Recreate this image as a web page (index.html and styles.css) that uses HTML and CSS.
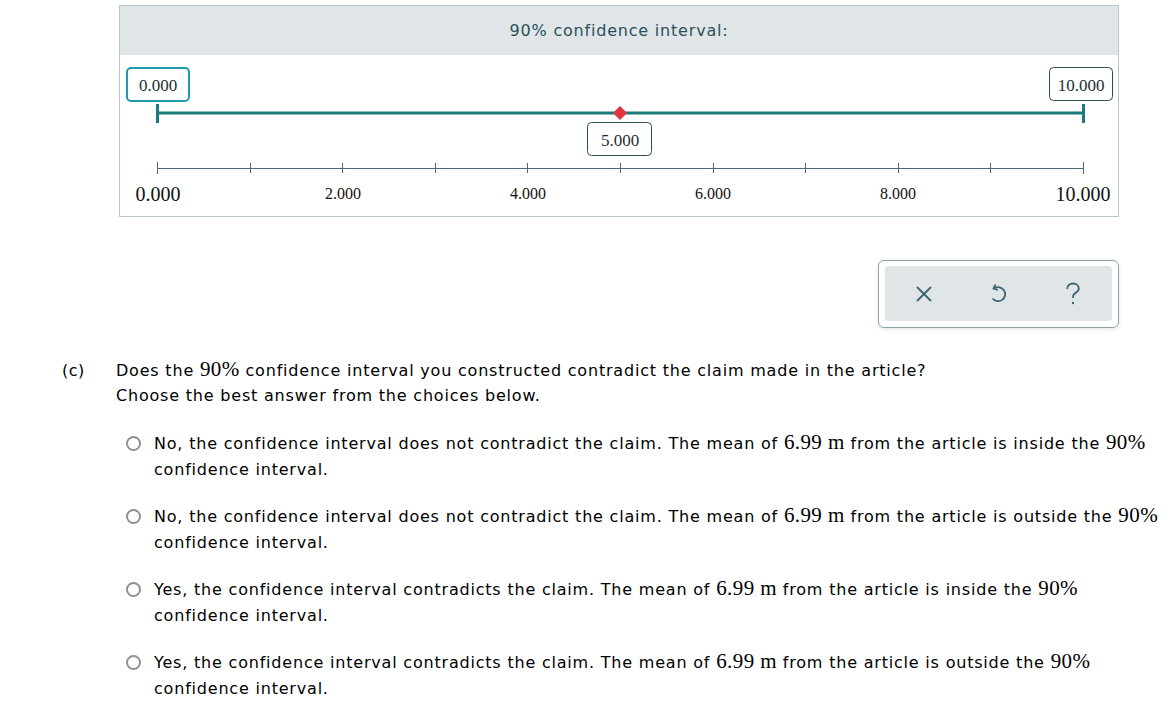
FILE: index.html
```html
<!DOCTYPE html>
<html>
<head>
<meta charset="utf-8">
<link rel="stylesheet" href="styles.css">
</head>
<body>
<div class="wrap">
  <div class="graph">
    <div class="graph-head">90% confidence interval:</div>
    <svg class="canvas" width="998" height="161" viewBox="0 0 998 161">
      <line x1="37" y1="58" x2="963" y2="58" stroke="#1b7a7c" stroke-width="3"/>
      <line x1="37.5" y1="49" x2="37.5" y2="68" stroke="#1b7a7c" stroke-width="3"/>
      <line x1="963.5" y1="49" x2="963.5" y2="68" stroke="#1b7a7c" stroke-width="3"/>
      <rect x="495" y="53" width="10" height="10" fill="#e0343f" transform="rotate(45 500 58)"/>
      <line x1="37" y1="113.5" x2="963" y2="113.5" stroke="#4a6a75" stroke-width="1"/>
      <g stroke="#4a6a75" stroke-width="1">
        <line x1="37.5" y1="107" x2="37.5" y2="119"/>
        <line x1="130.5" y1="108" x2="130.5" y2="118"/>
        <line x1="222.5" y1="108" x2="222.5" y2="118"/>
        <line x1="315.5" y1="108" x2="315.5" y2="118"/>
        <line x1="407.5" y1="108" x2="407.5" y2="118"/>
        <line x1="500.5" y1="108" x2="500.5" y2="118"/>
        <line x1="593.5" y1="108" x2="593.5" y2="118"/>
        <line x1="685.5" y1="108" x2="685.5" y2="118"/>
        <line x1="778.5" y1="108" x2="778.5" y2="118"/>
        <line x1="870.5" y1="108" x2="870.5" y2="118"/>
        <line x1="963.5" y1="107" x2="963.5" y2="119"/>
      </g>
      <g class="axis-label">
        <text x="38" y="146" class="big">0.000</text>
        <text x="223" y="144">2.000</text>
        <text x="408" y="144">4.000</text>
        <text x="593" y="144">6.000</text>
        <text x="778" y="144">8.000</text>
        <text x="963" y="146" class="big">10.000</text>
      </g>
      <rect x="7" y="13" width="62" height="33" rx="4" fill="#fff" stroke="#1e9ab0" stroke-width="2"/>
      <text x="38" y="36" class="box-label">0.000</text>
      <rect x="929.5" y="12.5" width="63" height="33" rx="4" fill="#fff" stroke="#2f4f58" stroke-width="1"/>
      <text x="961" y="36" class="box-label">10.000</text>
      <rect x="467.5" y="67.5" width="64" height="33" rx="4" fill="#fff" stroke="#2f4f58" stroke-width="1"/>
      <text x="500" y="91" class="box-label">5.000</text>
    </svg>
  </div>

  <div class="toolbar-row">
    <div class="toolbar">
      <div class="toolbar-inner">
        <span class="tool">
          <svg width="18" height="18" viewBox="0 0 18 18"><path d="M2 2 L16 16 M16 2 L2 16" stroke="#3d6570" stroke-width="1.8" fill="none"/></svg>
        </span>
        <span class="tool">
          <svg width="20" height="22" viewBox="0 0 20 22"><path d="M6.5 5.2 A7 7 0 1 1 4.6 15.5" stroke="#3d6570" stroke-width="1.8" fill="none"/><path d="M7.5 1.5 L5.5 5.5 L9.8 7" stroke="#3d6570" stroke-width="1.8" fill="none"/></svg>
        </span>
        <span class="tool">
          <svg width="16" height="24" viewBox="0 0 16 24"><path d="M2.2 7 C2.2 3.4 4.8 1.5 8 1.5 C11.3 1.5 13.8 3.6 13.8 6.6 C13.8 9.6 11 10.6 9.2 12 C8.2 12.8 8 13.8 8 16" stroke="#3d6570" stroke-width="1.8" fill="none"/><circle cx="8" cy="21" r="1.2" fill="#3d6570"/></svg>
        </span>
      </div>
    </div>
  </div>
</div>

<div class="question">
  <div class="q-letter">(c)</div>
  <div class="q-body">
    <p class="q-text">Does the <span class="m">90%</span> confidence interval you constructed contradict the claim made in the article?<br>Choose the best answer from the choices below.</p>
    <ul class="choices">
      <li class="choice"><span class="radio"></span><span class="c-text">No, the confidence interval does not contradict the claim. The mean of <span class="m">6.99 m</span> from the article is inside the <span class="m">90%</span> confidence interval.</span></li>
      <li class="choice"><span class="radio"></span><span class="c-text">No, the confidence interval does not contradict the claim. The mean of <span class="m">6.99 m</span> from the article is outside the <span class="m">90%</span> confidence interval.</span></li>
      <li class="choice"><span class="radio"></span><span class="c-text">Yes, the confidence interval contradicts the claim. The mean of <span class="m">6.99 m</span> from the article is inside the <span class="m">90%</span> confidence interval.</span></li>
      <li class="choice"><span class="radio"></span><span class="c-text">Yes, the confidence interval contradicts the claim. The mean of <span class="m">6.99 m</span> from the article is outside the <span class="m">90%</span> confidence interval.</span></li>
    </ul>
  </div>
</div>
</body>
</html>
```

FILE: styles.css
```css
html, body {
  margin: 0;
  padding: 0;
  background: #fff;
}
body {
  font-family: "DejaVu Sans", Verdana, sans-serif;
  font-size: 16px;
  letter-spacing: 0.8px;
  color: #000;
}
.wrap {
  padding: 5px 0 0 119px;
  width: 1000px;
}
.graph {
  width: 998px;
  border: 1px solid #b9c7cc;
}
.graph-head {
  height: 49px;
  background: #e0e6e8;
  color: #2d4f5a;
  font-size: 16px;
  text-align: center;
  line-height: 50px;
}
.canvas {
  display: block;
  letter-spacing: 0;
}
.axis-label text {
  font-family: "Liberation Serif", "Times New Roman", serif;
  font-size: 16px;
  fill: #111;
  text-anchor: middle;
}
.axis-label text.big {
  font-size: 20px;
}
.box-label {
  font-family: "Liberation Serif", "Times New Roman", serif;
  font-size: 17px;
  fill: #1c2e33;
  text-anchor: middle;
}
.toolbar-row {
  display: flex;
  justify-content: flex-end;
  margin-top: 43px;
}
.toolbar {
  width: 227px;
  height: 55px;
  padding: 5px 6px 6px 6px;
  border: 1px solid #8ea2a9;
  border-radius: 6px;
  box-shadow: 0 1px 4px rgba(0,0,0,0.12);
}
.toolbar-inner {
  height: 55px;
  background: #e0e6e8;
  border-radius: 4px;
  display: flex;
  align-items: center;
  justify-content: space-around;
  padding: 0 2px;
}
.tool {
  width: 40px;
  display: flex;
  justify-content: center;
  align-items: center;
}
.tool svg {
  display: block;
}
.question {
  display: flex;
  margin-top: 30px;
  width: 1166px;
}
.q-letter {
  width: 54px;
  padding-left: 62px;
  box-sizing: content-box;
  line-height: 25px;
  letter-spacing: 0.5px;
}
.q-body {
  flex: 1;
}
.q-text {
  margin: 0;
  line-height: 25px;
}
.m {
  font-family: "Liberation Serif", "Times New Roman", serif;
  font-size: 21px;
  letter-spacing: 0.4px;
  line-height: 16px;
}
.choices {
  list-style: none;
  margin: 23px 0 0 0;
  padding: 0;
}
.choice {
  position: relative;
  padding-left: 38px;
  margin-bottom: 21px;
  line-height: 26px;
}
.radio {
  position: absolute;
  left: 10px;
  top: 5px;
  width: 15px;
  height: 15px;
  border: 2px solid #8f8f96;
  border-radius: 50%;
  box-sizing: border-box;
}
.c-text {
  display: block;
}
```
